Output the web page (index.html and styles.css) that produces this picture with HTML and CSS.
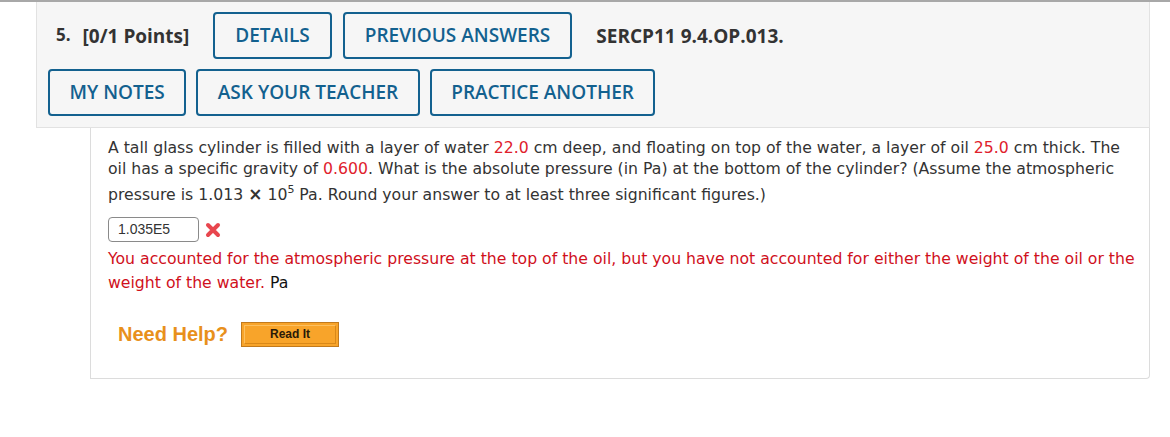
FILE: index.html
```html
<!DOCTYPE html>
<html>
<head>
<meta charset="utf-8">
<link rel="stylesheet" href="styles.css">
</head>
<body>
<div class="topline"></div>
<div class="question">
  <div class="header">
    <div class="row row1">
      <span class="qnum">5.</span>
      <span class="points">[0/1 Points]</span>
      <button class="btn">DETAILS</button>
      <button class="btn">PREVIOUS ANSWERS</button>
      <span class="code">SERCP11 9.4.OP.013.</span>
    </div>
    <div class="row row2">
      <button class="btn">MY NOTES</button>
      <button class="btn">ASK YOUR TEACHER</button>
      <button class="btn">PRACTICE ANOTHER</button>
    </div>
  </div>
  <div class="body">
    <p class="text">A tall glass cylinder is filled with a layer of water <span class="red">22.0</span> cm deep, and floating on top of the water, a layer of oil <span class="red">25.0</span> cm thick. The oil has a specific gravity of <span class="red">0.600</span>. What is the absolute pressure (in Pa) at the bottom of the cylinder? (Assume the atmospheric pressure is 1.013 <b class="times">×</b> 10<sup>5</sup> Pa. Round your answer to at least three significant figures.)</p>
    <div class="answer">
      <span class="input">1.035E5</span>
      <svg class="wrong" width="16" height="16" viewBox="0 0 16 16"><path d="M3 3 L13 13 M13 3 L3 13" stroke="#e8464e" stroke-width="4" stroke-linecap="round"/></svg>
    </div>
    <p class="feedback"><span class="fb">You accounted for the atmospheric pressure at the top of the oil, but you have not accounted for either the weight of the oil or the weight of the water.</span> Pa</p>
    <div class="help">
      <span class="needhelp">Need Help?</span>
      <span class="readit"><span class="readit-inner">Read It</span></span>
    </div>
  </div>
</div>
</body>
</html>
```

FILE: styles.css
```css
html, body {
  margin: 0;
  padding: 0;
  background: #fff;
}
.topline {
  height: 2px;
  background: #a8a8a8;
}
.question {
  margin-left: 36px;
  width: 1114px;
}
.header {
  background: #f6f6f6;
  border: 1px solid #e2e2e2;
  border-top: none;
  padding: 10px 0 11px 11px;
  font-family: "Open Sans", sans-serif;
}
.row {
  display: flex;
  align-items: center;
  gap: 11px;
}
.row1 {
  margin-bottom: 10px;
}
.row2 {
  gap: 10px;
}
.qnum {
  font-weight: 700;
  font-size: 17px;
  color: #333;
  margin-left: 8px;
  margin-right: 1px;
  position: relative;
  top: -1px;
}
.points {
  font-weight: 700;
  font-size: 19px;
  color: #333;
  margin-right: 13px;
}
.code {
  font-weight: 700;
  font-size: 19px;
  color: #333;
  margin-left: 13px;
}
.btn {
  height: 47px;
  box-sizing: border-box;
  border: 2px solid #13618f;
  border-radius: 4px;
  background: #f6f6f6;
  color: #13618f;
  font-family: "Open Sans", sans-serif;
  font-weight: 600;
  font-size: 19px;
  padding: 0 20px;
  line-height: 1;
}
.row2 .btn {
  padding: 0 19.5px;
}
.body {
  margin-left: 54px;
  border: 1px solid #dcdcdc;
  border-top: none;
  border-bottom-right-radius: 4px;
  height: 251px;
  box-sizing: border-box;
  padding: 9px 11px 0 17px;
  font-family: "DejaVu Sans", Verdana, sans-serif;
  font-size: 15.7px;
  color: #333;
}
.text {
  margin: 0;
  line-height: 21px;
}
.text sup {
  font-size: 11px;
  line-height: 22px;
  vertical-align: 7px;
}
.times {
  font-weight: 700;
  font-size: 17px;
}
.red {
  color: #e0202c;
}
.answer {
  display: flex;
  align-items: center;
  gap: 6px;
  margin-top: 12px;
}
.input {
  display: inline-block;
  box-sizing: border-box;
  width: 91px;
  height: 25px;
  border: 1px solid #8a8a8a;
  border-radius: 4px;
  font-family: "Liberation Sans", Arial, sans-serif;
  font-size: 14px;
  color: #333;
  padding: 3px 0 0 9px;
}
.feedback {
  margin: 5px 0 0 0;
  line-height: 24px;
  color: #111;
}
.fb {
  color: #d0101c;
}
.help {
  display: flex;
  align-items: center;
  margin-top: 27px;
  margin-left: 10px;
  gap: 13px;
}
.needhelp {
  font-family: "Liberation Sans", Arial, sans-serif;
  font-weight: 700;
  font-size: 20px;
  color: #e8901c;
}
.readit {
  display: inline-block;
  box-sizing: border-box;
  width: 98px;
  height: 25px;
  background: #f8a42a;
  border: 1px solid #c27a1c;
  padding: 2px;
}
.readit-inner {
  display: block;
  height: 100%;
  box-sizing: border-box;
  border: 1px solid #fcc060;
  border-right-color: #d98818;
  border-bottom-color: #d98818;
  text-align: center;
  font-family: "Liberation Sans", Arial, sans-serif;
  font-weight: 700;
  font-size: 12px;
  line-height: 17px;
  color: #2a1a08;
}
```
